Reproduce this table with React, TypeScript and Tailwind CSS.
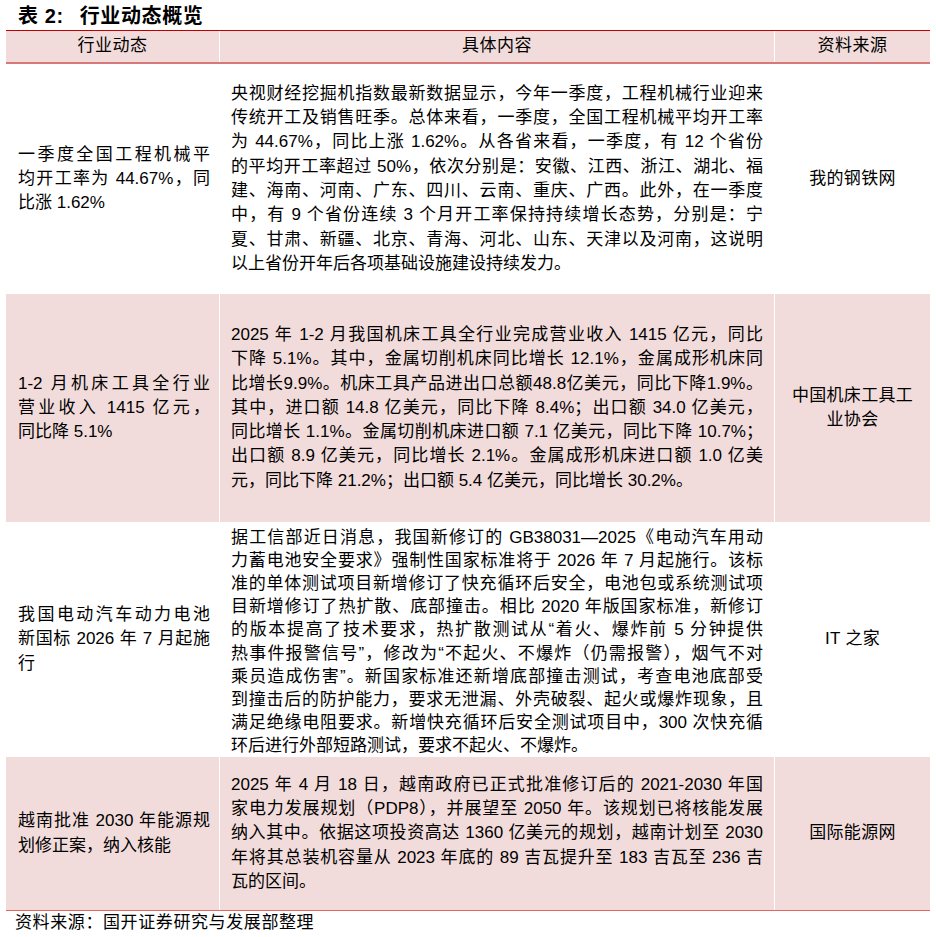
import React from 'react';

type Row = {
  topic: string[];
  body: string[];
  source: string[];
  height: string;
  pink: boolean;
  bodyClass?: string;
};

const rows: Row[] = [
  {
    topic: ['一季度全国工程机械平', '均开工率为 44.67%，同', '比涨 1.62%'],
    body: [
      '央视财经挖掘机指数最新数据显示，今年一季度，工程机械行业迎来',
      '传统开工及销售旺季。总体来看，一季度，全国工程机械平均开工率',
      '为 44.67%，同比上涨 1.62%。从各省来看，一季度，有 12 个省份',
      '的平均开工率超过 50%，依次分别是：安徽、江西、浙江、湖北、福',
      '建、海南、河南、广东、四川、云南、重庆、广西。此外，在一季度',
      '中，有 9 个省份连续 3 个月开工率保持持续增长态势，分别是：宁',
      '夏、甘肃、新疆、北京、青海、河北、山东、天津以及河南，这说明',
      '以上省份开年后各项基础设施建设持续发力。',
    ],
    source: ['我的钢铁网'],
    height: 'h-[230px]',
    pink: false,
  },
  {
    topic: ['1-2 月机床工具全行业', '营业收入 1415 亿元，', '同比降 5.1%'],
    body: [
      '2025 年 1-2 月我国机床工具全行业完成营业收入 1415 亿元，同比',
      '下降 5.1%。其中，金属切削机床同比增长 12.1%，金属成形机床同',
      '比增长9.9%。机床工具产品进出口总额48.8亿美元，同比下降1.9%。',
      '其中，进口额 14.8 亿美元，同比下降 8.4%；出口额 34.0 亿美元，',
      '同比增长 1.1%。金属切削机床进口额 7.1 亿美元，同比下降 10.7%；',
      '出口额 8.9 亿美元，同比增长 2.1%。金属成形机床进口额 1.0 亿美',
      '元，同比下降 21.2%；出口额 5.4 亿美元，同比增长 30.2%。',
    ],
    source: ['中国机床工具工', '业协会'],
    height: 'h-[228px]',
    pink: true,
  },
  {
    topic: ['我国电动汽车动力电池', '新国标 2026 年 7 月起施', '行'],
    body: [
      '据工信部近日消息，我国新修订的 GB38031—2025《电动汽车用动',
      '力蓄电池安全要求》强制性国家标准将于 2026 年 7 月起施行。该标',
      '准的单体测试项目新增修订了快充循环后安全，电池包或系统测试项',
      '目新增修订了热扩散、底部撞击。相比 2020 年版国家标准，新修订',
      '的版本提高了技术要求，热扩散测试从“着火、爆炸前 5 分钟提供',
      '热事件报警信号”，修改为“不起火、不爆炸（仍需报警），烟气不对',
      '乘员造成伤害”。新国家标准还新增底部撞击测试，考查电池底部受',
      '到撞击后的防护能力，要求无泄漏、外壳破裂、起火或爆炸现象，且',
      '满足绝缘电阻要求。新增快充循环后安全测试项目中，300 次快充循',
      '环后进行外部短路测试，要求不起火、不爆炸。',
    ],
    source: ['IT 之家'],
    height: 'h-[235px]',
    pink: false,
    bodyClass: 'leading-[23.1px] pt-[4px]',
  },
  {
    topic: ['越南批准 2030 年能源规', '划修正案，纳入核能'],
    body: [
      '2025 年 4 月 18 日，越南政府已正式批准修订后的 2021-2030 年国',
      '家电力发展规划（PDP8），并展望至 2050 年。该规划已将核能发展',
      '纳入其中。依据这项投资高达 1360 亿美元的规划，越南计划至 2030',
      '年将其总装机容量从 2023 年底的 89 吉瓦提升至 183 吉瓦至 236 吉',
      '瓦的区间。',
    ],
    source: ['国际能源网'],
    height: 'h-[153px]',
    pink: true,
  },
];

// every line but the last is stretched to the full cell width, like the printed table
const Lines = ({ lines, className }: { lines: string[]; className?: string }) => (
  <div className={className}>
    {lines.map((line, i) => (
      <div
        key={i}
        className={
          i < lines.length - 1
            ? 'whitespace-nowrap text-justify [text-align-last:justify] [text-justify:inter-character]'
            : 'whitespace-nowrap text-left'
        }
      >
        {line}
      </div>
    ))}
  </div>
);

const App = () => {
  return (
    <div
      lang="zh-CN"
      className="w-[936px] bg-white text-black font-['Liberation_Sans','Noto_Sans_CJK_SC',sans-serif]"
    >
      {/* Title */}
      <div className="flex h-[30px] items-center pl-[18px] pt-[1px] text-[20px] font-bold tracking-[0.6px]">
        <span>表 2:</span>
        <span className="ml-[16px]">行业动态概览</span>
      </div>

      <div className="ml-[6px] w-[924px] text-[17px] leading-[24.3px]">
        {/* Header */}
        <div className="grid h-[34px] grid-cols-[214px_555px_155px] border-t border-b-2 border-t-[#c00000] border-b-[#d7787a] bg-[#f2dcdb] tracking-[0.5px]">
          <div className="flex items-center justify-center border-r border-white">行业动态</div>
          <div className="flex items-center justify-center border-r border-white">具体内容</div>
          <div className="flex items-center justify-center">资料来源</div>
        </div>

        {/* Rows */}
        {rows.map((row, idx) => (
          <div
            key={idx}
            className={`grid grid-cols-[214px_555px_155px] ${row.height} ${row.pink ? 'bg-[#f2dcdb]' : 'bg-white'}`}
          >
            <div className="flex items-center border-r border-white pl-[12px] pr-[9px]">
              <Lines lines={row.topic} className="w-full" />
            </div>
            <div className={`flex items-center border-r border-white pl-[11px] pr-[11px] ${row.bodyClass ?? ''}`}>
              <Lines lines={row.body} className="w-full" />
            </div>
            <div className="flex flex-col items-center justify-center text-center tracking-[0.3px]">
              {row.source.map((s, i) => (
                <div key={i}>{s}</div>
              ))}
            </div>
          </div>
        ))}

        <div className="border-t border-[#e06666]" />
      </div>

      {/* Footer */}
      <div className="h-[26px] pl-[15px] text-[17px] leading-[24px] tracking-[0.6px]">
        资料来源：国开证券研究与发展部整理
      </div>
    </div>
  );
};

export default App;
